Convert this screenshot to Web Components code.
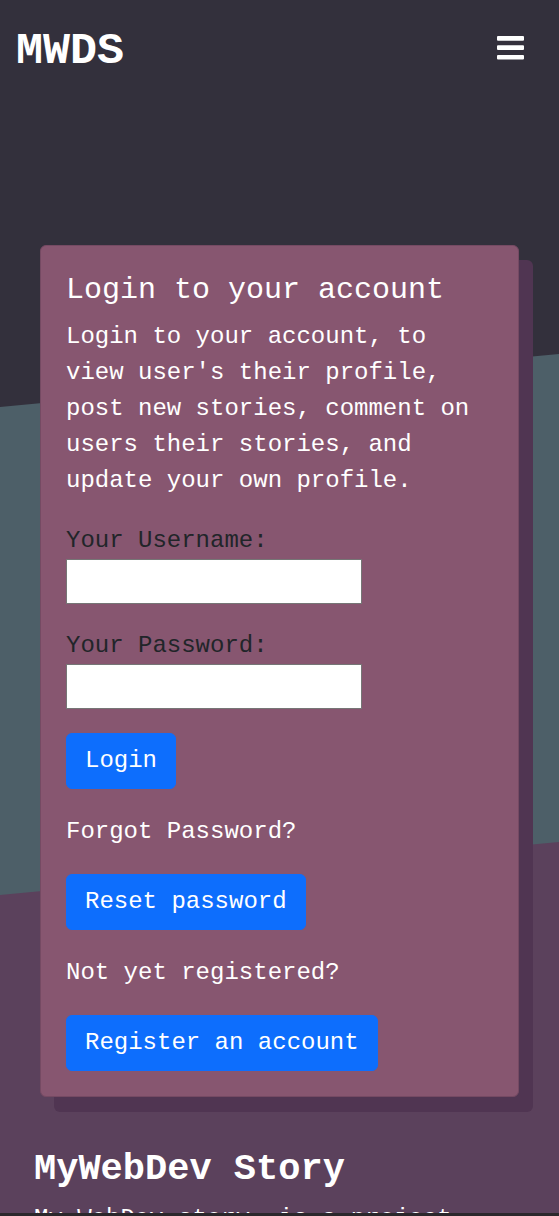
<!DOCTYPE html>
<html lang="en">
<head>
<meta charset="utf-8">
<meta name="viewport" content="width=device-width, initial-scale=1">
<title>MWDS</title>
<style>
body { margin: 0; font: 24px/36px "Liberation Mono", monospace; color: #fff; background: #33303c; }
</style>
</head>
<body>
<mw-page>
  <mw-navbar slot="top"></mw-navbar>
  <mw-card heading="Login to your account">
    <p>Login to your account, to view user's their profile, post new stories, comment on users their stories, and update your own profile.</p>
    <mw-login-form></mw-login-form>
  </mw-card>
  <mw-story heading="MyWebDev Story">My WebDev story, is a project</mw-story>
</mw-page>
<script>
const define = (name, html, setup) => customElements.define(name, class extends HTMLElement {
  connectedCallback() {
    if (this.shadowRoot) return;
    const template = document.createElement('template');
    template.innerHTML = html;
    this.attachShadow({ mode: 'open' }).append(template.content.cloneNode(true));
    if (setup) setup(this);
  }
});
const setHeading = el => { el.shadowRoot.querySelector('h1, h2').textContent = el.getAttribute('heading'); };

define('mw-page', `
<style>
:host { display: grid; grid-template-rows: minmax(0, 1fr) 3px; height: 100vh; background: #2b282c; }
.view { overflow: hidden; position: relative; background: #5b415c; }
.backdrop { position: absolute; inset: 0; width: 100%; height: 896px; }
.content { position: relative; }
</style>
<div class="view">
  <svg class="backdrop" viewBox="0 0 559 896" preserveAspectRatio="none" aria-hidden="true">
    <path fill="#4d5f68" d="M0 0H559V842L0 895Z"/>
    <path fill="#33303c" d="M0 0H559V354L0 407Z"/>
  </svg>
  <div class="content"><slot name="top"></slot><main><slot></slot></main></div>
</div>`);

define('mw-navbar', `
<style>
:host { display: block; }
nav { display: flex; align-items: center; justify-content: space-between; height: 96px; padding: 0 32px 0 16px; }
a { padding-top: 8px; color: #fff; font-size: 45px; line-height: 60px; font-weight: 700; text-decoration: none; }
button { display: flex; padding: 0; border: 0; background: none; color: #fff; }
</style>
<nav>
  <a href="#">MWDS</a>
  <button type="button" aria-label="Menu">
    <svg width="32" height="32" viewBox="0 0 32 32" fill="currentColor"><path d="M3 4h25a1 1 0 0 1 1 1v2.800a1 1 0 0 1-1 1H3a1 1 0 0 1-1-1V5a1 1 0 0 1 1-1zM3 13.300h25a1 1 0 0 1 1 1v2.700a1 1 0 0 1-1 1H3a1 1 0 0 1-1-1v-2.700a1 1 0 0 1 1-1zM3 23h25a1 1 0 0 1 1 1v2.600a1 1 0 0 1-1 1H3a1 1 0 0 1-1-1V24a1 1 0 0 1 1-1z"/></svg>
  </button>
</nav>`);

define('mw-card', `
<style>
:host { display: block; margin: 149px 40px 0; padding: 25px; border: 1px solid #754a63; border-radius: 6px; background: #875670; box-shadow: 14px 15px 0 #503552; }
h1 { margin: 0 0 10px; font-size: 30px; line-height: 38px; font-weight: 400; }
::slotted(p) { margin: 0 0 24px; }
</style>
<h1></h1><slot></slot>`, setHeading);

define('mw-field', `
<style>
:host { display: block; margin-bottom: 24px; color: #212529; }
label { display: block; }
input { box-sizing: border-box; display: block; width: 296px; max-width: 100%; height: 45px; margin: 0; border: 1px solid #767676; background: #fff; font: inherit; padding: 0 2px; border-radius: 0; }
</style>
<label for="box"></label><input id="box">`, el => {
  el.shadowRoot.querySelector('label').textContent = el.getAttribute('label');
  el.shadowRoot.querySelector('input').type = el.getAttribute('type');
});

define('mw-button', `
<style>
:host { display: block; }
button { display: block; padding: 9px 18px; border: 1px solid #0d6efd; border-radius: 6px; background: #0d6efd; color: #fff; font: inherit; }
</style>
<button type="button"><slot></slot></button>`);

define('mw-login-form', `
<style>
:host { display: block; }
p { margin: 25px 0 24px; }
</style>
<form>
  <mw-field label="Your Username:" type="text"></mw-field>
  <mw-field label="Your Password:" type="password"></mw-field>
  <mw-button>Login</mw-button>
  <p>Forgot Password?</p>
  <mw-button>Reset password</mw-button>
  <p>Not yet registered?</p>
  <mw-button>Register an account</mw-button>
</form>`);

define('mw-story', `
<style>
:host { display: block; padding: 50px 34px 0; }
h2 { margin: 0 0 10px; font-size: 37px; line-height: 44px; font-weight: 700; }
p { margin: 0; }
</style>
<h2></h2><p><slot></slot></p>`, setHeading);
</script>
</body>
</html>
